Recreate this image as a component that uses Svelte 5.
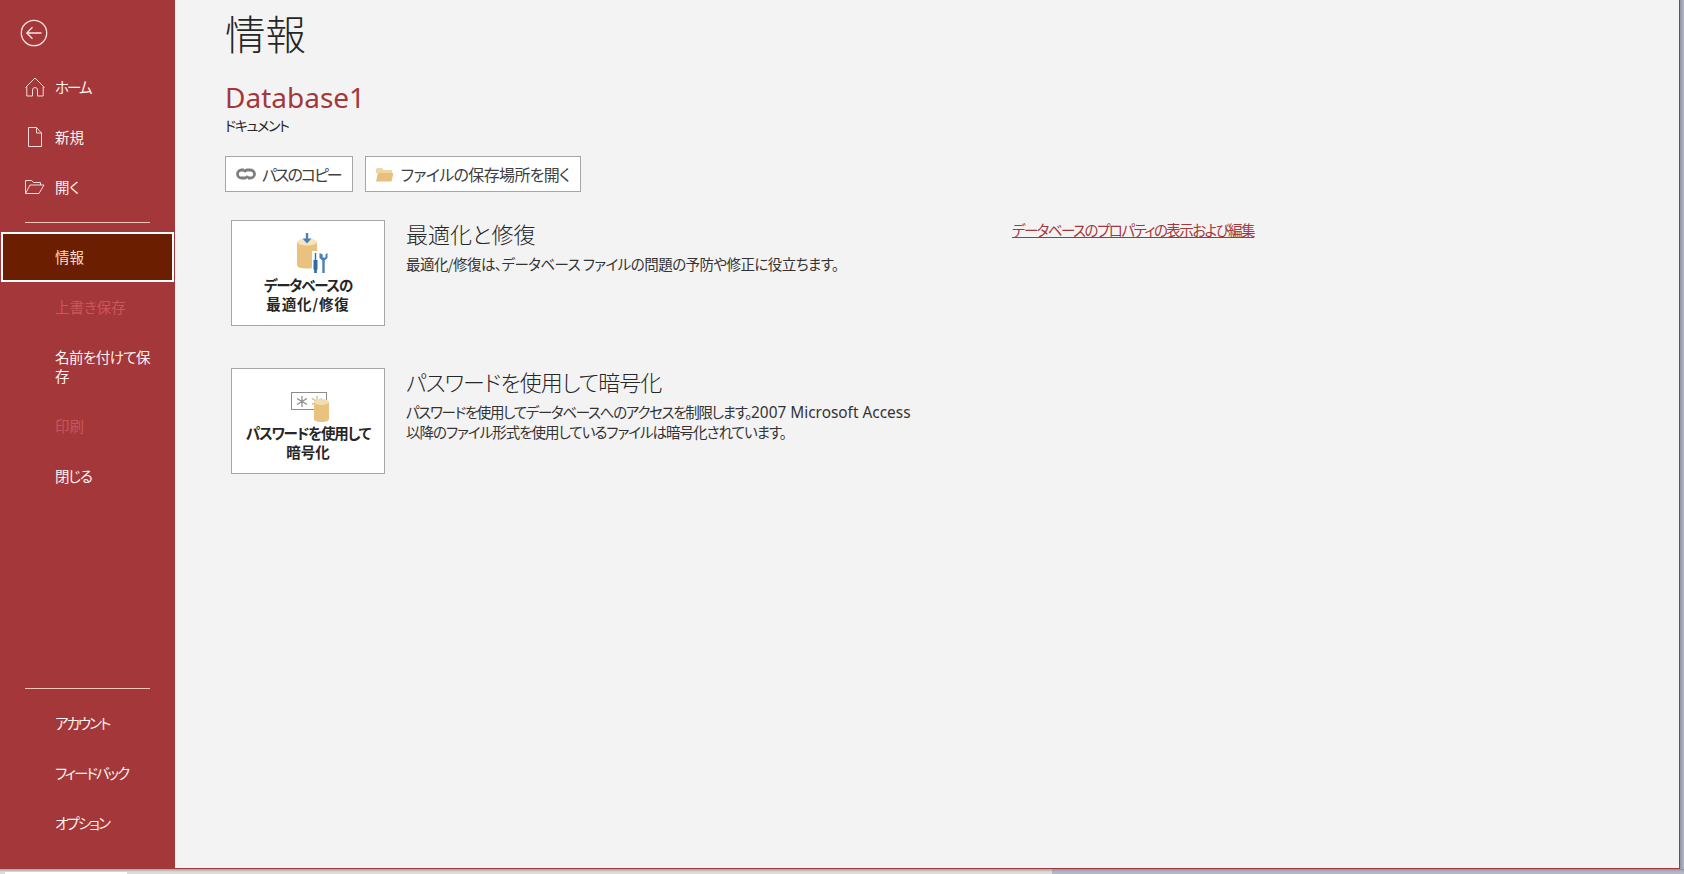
<script>
  const top = [
    { label: 'ホーム', icon: 'home', cls: 'kana' },
    { label: '新規', icon: 'page', cls: '' },
    { label: '開く', icon: 'open', cls: '' }
  ];
  const mid = [
    { label: '上書き保存', off: true, cls: '' },
    { label: '名前を付けて保存', tall: true, cls: 'slight' },
    { label: '印刷', off: true, cls: '' },
    { label: '閉じる', cls: 'semi' }
  ];
  const bottom = ['アカウント', 'フィードバック', 'オプション'];
</script>

<div class="screen">
  <div class="upper">
    <div class="window">
      <nav class="side">
        <div class="backrow">
          <svg class="back" width="28" height="28" viewBox="0 0 28 28" fill="none" stroke="#f8e4e0" stroke-width="1.3">
            <circle cx="14" cy="14" r="12.7" />
            <path d="M7 14h14.5M12.5 8.3 6.8 14l5.7 5.7" />
          </svg>
        </div>
        {#each top as it}
          <div class="item">
            <span class="ic">
              {#if it.icon === 'home'}
                <svg width="20" height="20" viewBox="0 0 20 20" fill="none" stroke="#f5dcd8" stroke-width="1">
                  <path d="M.5 10.5 10 1l9.5 9.5M1.8 9.5v9.5h5.7v-6a2.5 2.5 0 0 1 5 0v6h5.7V9.5" />
                </svg>
              {:else if it.icon === 'page'}
                <svg width="20" height="20" viewBox="0 0 20 20" fill="none" stroke="#f5dcd8" stroke-width="1">
                  <path d="M3.5.5h8l5 5.5v13.5h-13zM11.5.5v5.5h5" />
                </svg>
              {:else}
                <svg width="20" height="20" viewBox="0 0 20 20" fill="none" stroke="#f5dcd8" stroke-width="1">
                  <path d="M.5 16.5v-13h6l2 2h7v2.5M.5 16.5h13.5l5-8.500h-14z" />
                </svg>
              {/if}
            </span>
            <span class="lift {it.cls}">{it.label}</span>
          </div>
        {/each}
        <div class="rule first"></div>
        <div class="item active"><span class="lift">情報</span></div>
        {#each mid as it}
          <div class="item" class:off={it.off} class:tall={it.tall}><span class="wrap lift {it.cls}">{it.label}</span></div>
        {/each}
        <div class="grow"></div>
        <div class="rule last"></div>
        {#each bottom as label}
          <div class="item"><span class="kana">{label}</span></div>
        {/each}
        <div class="foot"></div>
      </nav>

      <main class="main">
        <h1>情報</h1>
        <div class="dbname">Database1</div>
        <div class="doc">ドキュメント</div>
        <div class="btns">
          <button class="btn copy">
            <svg width="20" height="12" viewBox="0 0 20 12" fill="none" stroke="#7f7f7f" stroke-width="2.8">
              <path d="M8 2H5.500a4 4 0 0 0 0 8H9a4 4 0 0 0 3-2" />
              <path d="M12 10h2.500a4 4 0 0 0 0-8H11a4 4 0 0 0-3 2" />
            </svg>
            <span>パスのコピー</span>
          </button>
          <button class="btn where">
            <svg width="18" height="15" viewBox="0 0 18 15">
              <path d="M0 2.500 1 1h5l1.500 2H16v3H0z" fill="#f0d6a4" />
              <path d="M0 14.500 2 6h15.500l-2 8.500z" fill="#e8bf7d" />
            </svg>
            <span>ファイルの保存場所を開く</span>
          </button>
        </div>

        <section class="row first-row">
          <div class="card">
            <svg class="cardicon one" width="36" height="40" viewBox="0 0 36 40">
              <path d="M2 9v23c0 2.500 4 3.500 10 3.500s10-1 10-3.500V9z" fill="#e9c27f" />
              <ellipse cx="12" cy="9" rx="10" ry="3.500" fill="#f6e3bf" />
              <path d="M10.800 0h2.400v6h-2.400z" fill="#4a80b4" />
              <path d="M7.500 5.500h9l-4.500 5z" fill="#4a80b4" />
              <rect x="17" y="18" width="19" height="22" fill="#fff" />
              <path d="M19.800 20h1.400v7h1.300v9l-.7 1.500V40h-2.600v-2.500l-.7-1.500v-9h1.300z" fill="#2f6ca3" />
              <path d="M24.500 20v5l2.800 2.500V40h2.400V27.500l2.800-2.500v-5l-2 1.500v3h-2.800v-3z" fill="#4a80b4" />
            </svg>
            <div class="cardtext"><span class="squeeze">データベースの</span><br /><span class="spread">最適化/修復</span></div>
          </div>
          <div class="info">
            <h2>最適化と修復</h2>
            <p class="tight">最適化/修復は、データベース ファイルの問題の予防や修正に役立ちます。</p>
          </div>
          <span class="link">データベースのプロパティの表示および編集</span>
        </section>

        <section class="row second-row">
          <div class="card">
            <svg class="cardicon two" width="40" height="31" viewBox="0 0 40 31">
              <rect x="1.500" y="1.500" width="35" height="17" fill="#fff" stroke="#8c8c8c" />
              <path d="M12 5v11M7 7.500l10 6M17 7.500l-10 6" stroke="#8c8c8c" stroke-width="1.200" fill="none" />
              <path d="M27 5v11M22 7.500l10 6M32 7.500l-10 6" stroke="#c9b287" stroke-width="1.200" fill="none" />
              <path d="M24 11v17c0 2 3 3 7.500 3s7.500-1 7.500-3V11z" fill="#e9c27f" />
              <ellipse cx="31.500" cy="11" rx="7.500" ry="3" fill="#f3dcae" />
            </svg>
            <div class="cardtext"><span class="squeeze">パスワードを使用して</span><br />暗号化</div>
          </div>
          <div class="info">
            <h2 class="narrow">パスワードを使用して暗号化</h2>
            <p><span class="jp">パスワードを使用してデータベースへのアクセスを制限します。</span><span class="lat">2007 Microsoft Access</span><br /><span class="jp2">以降のファイル形式を使用しているファイルは暗号化されています。</span></p>
          </div>
        </section>
      </main>
    </div>
    <div class="rightstrip"></div>
  </div>
  <div class="under">
    <div class="under-left"><div class="tab"></div></div>
    <div class="under-right"></div>
  </div>
</div>

<style>
  :global(body) { margin: 0; }
  .screen {
    width: 1684px;
    height: 874px;
    overflow: hidden;
    display: flex;
    flex-direction: column;
    font-family: "Noto Sans CJK JP", "Noto Sans", sans-serif;
    font-feature-settings: "palt";
    color: #262626;
  }
  .upper { display: flex; height: 869px; flex: none; }
  .window {
    flex: 1;
    display: flex;
    background: #f3f3f3;
    border-right: 1px solid #a4373a;
    border-bottom: 1px solid #a4373a;
    box-sizing: border-box;
  }
  .rightstrip { width: 4px; background: linear-gradient(to right, #8f95a8, #b4b8c6); }
  .under { display: flex; height: 5px; flex: none; }
  .under-left {
    width: 1052px;
    background: linear-gradient(#a3a3a3, #dcdcda 60%);
    display: flex;
    align-items: flex-end;
  }
  .tab { width: 122px; height: 2px; margin-left: 5px; background: #fff; }
  .under-right { flex: 1; background: linear-gradient(#8f95a8, #b4b8c6 60%); }

  .side {
    width: 175px;
    flex: none;
    background: #a4373a;
    display: flex;
    flex-direction: column;
    color: #fdf3f1;
    font-size: 14.500px;
  }
  .backrow { height: 62px; flex: none; box-sizing: border-box; padding: 19px 0 0 20px; }
  .back { display: block; }
  .item {
    height: 50px;
    flex: none;
    display: flex;
    align-items: center;
    padding-left: 55px;
    position: relative;
  }
  .lift { margin-bottom: 2px; }
  .kana { letter-spacing: -1.950px; }
  .semi { letter-spacing: -1.100px; }
  .slight { letter-spacing: -0.550px; }
  .ic { position: absolute; left: 25px; top: 15px; width: 20px; height: 20px; }
  .ic svg { display: block; }
  .item.off { color: #c9565c; }
  .item.tall { height: 69px; }
  .wrap { width: 98px; line-height: 19px; }
  .item.active {
    margin-left: 1px;
    width: 173px;
    box-sizing: border-box;
    background: #6b1f00;
    border: 2px solid #fff;
    color: #fbdcc8;
    padding-left: 52px;
  }
  .rule { height: 1px; background: #f0c4b8; margin: 0 25px; flex: none; }
  .rule.first { margin-top: 10px; margin-bottom: 9px; }
  .rule.last { margin-bottom: 8px; }
  .grow { flex: 1; }
  .foot { height: 21px; flex: none; }

  .main { flex: 1; padding-left: 50px; min-width: 0; }
  h1 {
    margin: 0;
    font-size: 40.500px;
    font-weight: 300;
    line-height: 66px;
    color: #262626;
  }
  .dbname {
    font-size: 28px;
    line-height: 40px;
    margin-top: 11px;
    color: #a4373a;
    font-family: "Noto Sans", sans-serif;
  }
  .doc { font-size: 14px; line-height: 16px; letter-spacing: -1.300px; margin-top: 0; }
  .btns { display: flex; gap: 12px; margin-top: 23px; }
  .btn {
    height: 36px;
    box-sizing: border-box;
    border: 1px solid #a6a6a6;
    background: #fff;
    display: flex;
    align-items: center;
    gap: 7px;
    padding: 0 10px;
    font: inherit;
    font-size: 16px;
    color: #404040;
  }
  .copy { gap: 6px; padding-right: 11px; }
  .copy span { letter-spacing: -2px; }
  .where span { letter-spacing: -0.650px; }
  .row { display: flex; margin-left: 6px; }
  .first-row { margin-top: 28px; }
  .second-row { margin-top: 42px; }
  .card {
    width: 154px;
    height: 106px;
    box-sizing: border-box;
    border: 1px solid #a6a6a6;
    background: #fff;
    flex: none;
    text-align: center;
    display: flex;
    flex-direction: column;
    align-items: center;
  }
  .cardicon { display: block; flex: none; }
  .one { margin: 12px 0 0 10px; height: 40px; }
  .two { margin: 22px 0 0 4px; height: 31px; }
  .cardtext {
    font-size: 14.500px;
    font-weight: 700;
    line-height: 19px;
    color: #262626;
    margin-top: 2px;
  }
  .two + .cardtext { margin-top: 1px; }
  .squeeze { letter-spacing: -1.200px; }
  .spread { letter-spacing: 0.900px; }
  .info { width: 605px; flex: none; margin-left: 21px; }
  h2 {
    margin: 0;
    font-size: 22px;
    font-weight: 300;
    line-height: 27px;
    color: #262626;
  }
  .narrow { letter-spacing: -0.950px; }
  p {
    margin: 7px 0 0;
    font-size: 14.500px;
    line-height: 19.300px;
    color: #333;
  }
  .tight { letter-spacing: -0.550px; }
  .jp { letter-spacing: -1.310px; }
  .jp2 { letter-spacing: -1px; }
  .lat { font-family: "Noto Sans", sans-serif; font-size: 15.400px; }
  .link {
    font-size: 14.500px;
    line-height: 20px;
    color: #a4373a;
    text-decoration: underline;
    white-space: nowrap;
    letter-spacing: -1.550px;
    margin-left: 1px;
  }
</style>
